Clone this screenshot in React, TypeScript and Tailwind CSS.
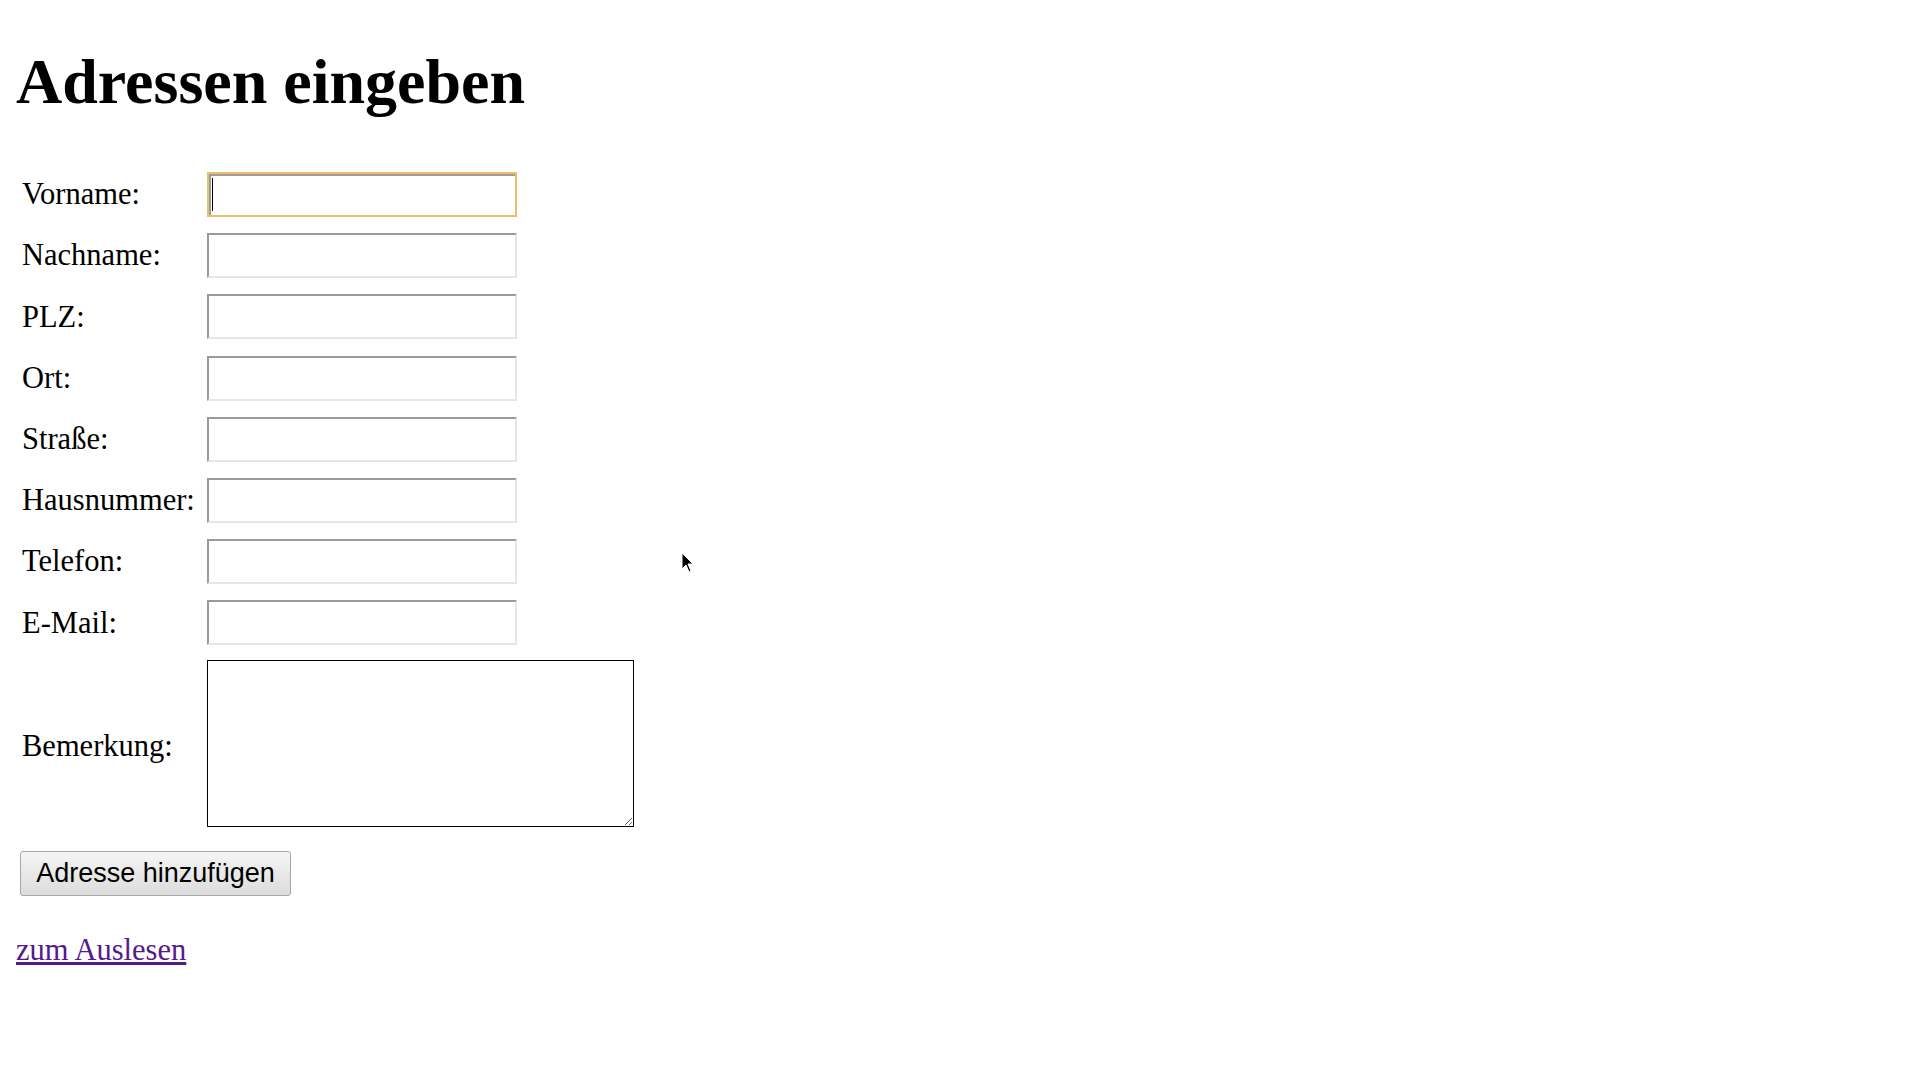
const fields = [
  "Vorname:",
  "Nachname:",
  "PLZ:",
  "Ort:",
  "Straße:",
  "Hausnummer:",
  "Telefon:",
  "E-Mail:",
];

export default function App() {
  return (
    <div className="relative min-h-screen bg-white px-4 font-['Liberation_Serif','Times_New_Roman',serif] text-black">
      <h1 className="pt-[46px] text-[64px] font-bold leading-[72px]">Adressen eingeben</h1>

      <form className="mt-[54px]" onSubmit={(e) => e.preventDefault()}>
        <div className="grid grid-cols-[191px_auto] gap-y-[16.2px] items-center">
          {fields.map((label, i) => (
            <div key={label} className="contents">
              <label className="pl-[6px] text-[30.5px] leading-none whitespace-nowrap">{label}</label>
              {i === 0 ? (
                <div className="relative w-[310px] h-[45px]">
                  <input
                    type="text"
                    className="w-full h-full border-2 border-[#ecbd6a] bg-white shadow-[inset_2px_2px_0_#9c9c9c] outline-none"
                  />
                  {/* caret */}
                  <span className="absolute left-[5px] top-[6px] h-[33px] w-px bg-black"></span>
                </div>
              ) : (
                <input
                  type="text"
                  className="w-[310px] h-[45px] border-2 border-t-[#9a9a9a] border-l-[#9a9a9a] border-b-[#e6e6e6] border-r-[#e6e6e6] bg-white outline-none"
                />
              )}
            </div>
          ))}
          <label className="pl-[6px] text-[30.5px] leading-none pt-[4px]">Bemerkung:</label>
          <textarea className="-mt-[2px] w-[427px] h-[167px] border border-black bg-white outline-none"></textarea>
        </div>

        <button
          type="submit"
          className="mt-[24px] ml-[4px] h-[45px] w-[271px] rounded-[3px] border border-[#a6a6a6] bg-gradient-to-b from-[#f5f5f5] to-[#dcdcdc] font-['Liberation_Sans',Arial,sans-serif] text-[27px] text-black"
        >
          Adresse hinzufügen
        </button>
      </form>

      <a href="#" className="mt-[32px] inline-block text-[30.5px] text-[#551a8b] underline">
        zum Auslesen
      </a>

      {/* mouse pointer */}
      <svg
        className="absolute left-[681px] top-[552px]"
        width="13"
        height="21"
        viewBox="0 0 13 21"
      >
        <path d="M1 1 L1 17 L5 13 L8 20 L10 19 L7 12 L12 12 Z" fill="#000" stroke="#fff" strokeWidth="1" />
      </svg>
    </div>
  );
}
